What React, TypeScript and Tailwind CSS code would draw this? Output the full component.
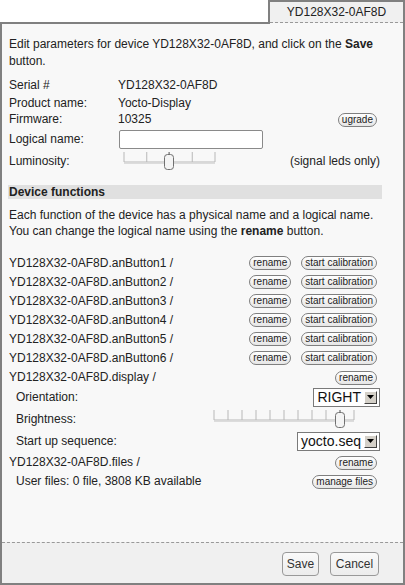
import React from "react";

const Pill: React.FC<{ children: React.ReactNode }> = ({ children }) => (
  <button className="h-[14px] px-[3px] rounded-[7px] border border-[#7f7f7f] bg-gradient-to-b from-white to-[#e6e6e6] text-[10px] leading-[12px] text-[#222]">
    {children}
  </button>
);

const Slider: React.FC<{ ticks: number; width: number; thumb: number }> = ({ ticks, width, thumb }) => {
  const step = (width - 2) / (ticks - 1);
  return (
    <svg width={width} height={20} viewBox={`0 0 ${width} 20`}>
      {Array.from({ length: ticks }).map((_, i) => (
        <line key={i} x1={1 + i * step} y1={1} x2={1 + i * step} y2={11} stroke="#b8b8b8" strokeWidth={1} />
      ))}
      <line x1={1} y1={11} x2={width - 1} y2={11} stroke="#b8b8b8" strokeWidth={1} />
      <line x1={1} y1={12.5} x2={width - 1} y2={12.5} stroke="#dcdcdc" strokeWidth={1} />
      <rect x={thumb + 0.5} y={3.5} width={9} height={15} rx={3} fill="#f4f4f4" stroke="#707070" />
      <line x1={thumb + 5} y1={1} x2={thumb + 5} y2={4} stroke="#707070" />
    </svg>
  );
};

const Select: React.FC<{ value: string }> = ({ value }) => (
  <div className="flex items-center h-[19px] border border-[#7a7a7a] bg-white">
    <span className="px-[3px] text-[14px] leading-[17px] text-[#111]">{value}</span>
    <div className="w-[13px] h-[13px] mr-[2px] bg-[#d4d0c8] border-t border-l border-t-white border-l-white border-b border-r border-b-[#404040] border-r-[#404040] flex items-center justify-center">
      <svg width="7" height="4" viewBox="0 0 7 4">
        <path d="M0 0h7L3.5 4z" fill="#000" />
      </svg>
    </div>
  </div>
);

const fns = [1, 2, 3, 4, 5, 6];

export default function App() {
  return (
    <div
      className="w-[405px] h-[585px] flex flex-col bg-white text-[#222] text-[12px]"
      style={{ fontFamily: '"Liberation Sans", Arial, sans-serif' }}
    >
      {/* Tab header */}
      <div className="flex h-[24px]">
        <div className="flex-1 border-b-2 border-[#808080]" />
        <div className="w-[137px] flex flex-col border-t-2 border-l-2 border-r-2 border-[#808080] bg-[#f0f0f0]">
          <div className="h-[20px] flex items-center justify-center text-[12px] text-[#222]">YD128X32-0AF8D</div>
          <div className="border-b border-dashed border-[#999]" />
          <div className="h-px bg-[#f8f8f8]" />
        </div>
      </div>

      {/* Panel */}
      <div className="flex-1 flex flex-col border-l-2 border-r-2 border-b-2 border-[#808080] bg-[#f8f8f8]">
        <div className="flex-1 pl-[7px] pr-[21px]">
          <p className="pt-[12px] leading-[17px]">
            Edit parameters for device YD128X32-0AF8D, and click on the <b>Save</b> button.
          </p>

          {/* Device info */}
          <div className="mt-[6px]">
            <div className="flex items-center h-[18px]">
              <span className="w-[109px]">Serial #</span>
              <span>YD128X32-0AF8D</span>
            </div>
            <div className="flex items-center h-[17px]">
              <span className="w-[109px]">Product name:</span>
              <span>Yocto-Display</span>
            </div>
            <div className="flex items-center h-[16px]">
              <span className="w-[109px]">Firmware:</span>
              <span>10325</span>
              <div className="ml-auto mr-[5px]">
                <Pill>ugrade</Pill>
              </div>
            </div>
            <div className="flex items-center h-[24px]">
              <span className="w-[109px]">Logical name:</span>
              <input
                type="text"
                className="ml-[1px] w-[144px] h-[19px] bg-white border border-[#8a8a8a] rounded-[2px] outline-none"
              />
            </div>
            <div className="flex items-center h-[20px]">
              <span className="w-[109px]">Luminosity:</span>
              <div className="ml-[5px]">
                <Slider ticks={5} width={93} thumb={41} />
              </div>
              <span className="ml-auto mr-[2px]">(signal leds only)</span>
            </div>
          </div>

          {/* Device functions */}
          <div className="mt-[14px] -ml-px h-[14px] bg-[#e0e0e0] pl-px flex items-center font-bold">
            Device functions
          </div>
          <p className="mt-[8px] leading-[16px]">
            Each function of the device has a physical name and a logical name. You can change the logical name using
            the <b>rename</b> button.
          </p>

          <div className="mt-[14px]">
            {fns.map((n) => (
              <div key={n} className="flex items-center h-[19px]">
                <span>YD128X32-0AF8D.anButton{n} /</span>
                <div className="ml-auto mr-[5px] flex gap-[10px]">
                  <Pill>rename</Pill>
                  <Pill>start calibration</Pill>
                </div>
              </div>
            ))}
            <div className="flex items-center h-[19px]">
              <span>YD128X32-0AF8D.display /</span>
              <div className="ml-auto mr-[5px]">
                <Pill>rename</Pill>
              </div>
            </div>
            <div className="flex items-center h-[22px] pl-[7px]">
              <span>Orientation:</span>
              <div className="ml-auto mr-[2px]">
                <Select value="RIGHT" />
              </div>
            </div>
            <div className="flex items-center h-[22px] pl-[7px]">
              <span>Brightness:</span>
              <div className="ml-auto mr-[27px]">
                <Slider ticks={11} width={142} thumb={122} />
              </div>
            </div>
            <div className="flex items-center h-[22px] pl-[7px]">
              <span>Start up sequence:</span>
              <div className="ml-auto mr-[2px]">
                <Select value="yocto.seq" />
              </div>
            </div>
            <div className="flex items-center h-[19px]">
              <span>YD128X32-0AF8D.files /</span>
              <div className="ml-auto mr-[5px]">
                <Pill>rename</Pill>
              </div>
            </div>
            <div className="flex items-center h-[19px] pl-[7px]">
              <span>User files: 0 file, 3808 KB available</span>
              <div className="ml-auto mr-[5px]">
                <Pill>manage files</Pill>
              </div>
            </div>
          </div>
        </div>

        {/* Footer */}
        <div className="h-[41px] border-t border-dashed border-[#999] bg-[#f0f0f0] flex justify-end items-start pt-[9px] pr-[24px] gap-[11px]">
          <button className="h-[24px] w-[37px] rounded-[4px] border border-[#999] bg-gradient-to-b from-[#fafafa] to-[#ececec] text-[12px] text-[#333]">
            Save
          </button>
          <button className="h-[24px] w-[49px] rounded-[4px] border border-[#999] bg-gradient-to-b from-[#fafafa] to-[#ececec] text-[12px] text-[#333]">
            Cancel
          </button>
        </div>
      </div>
    </div>
  );
}
